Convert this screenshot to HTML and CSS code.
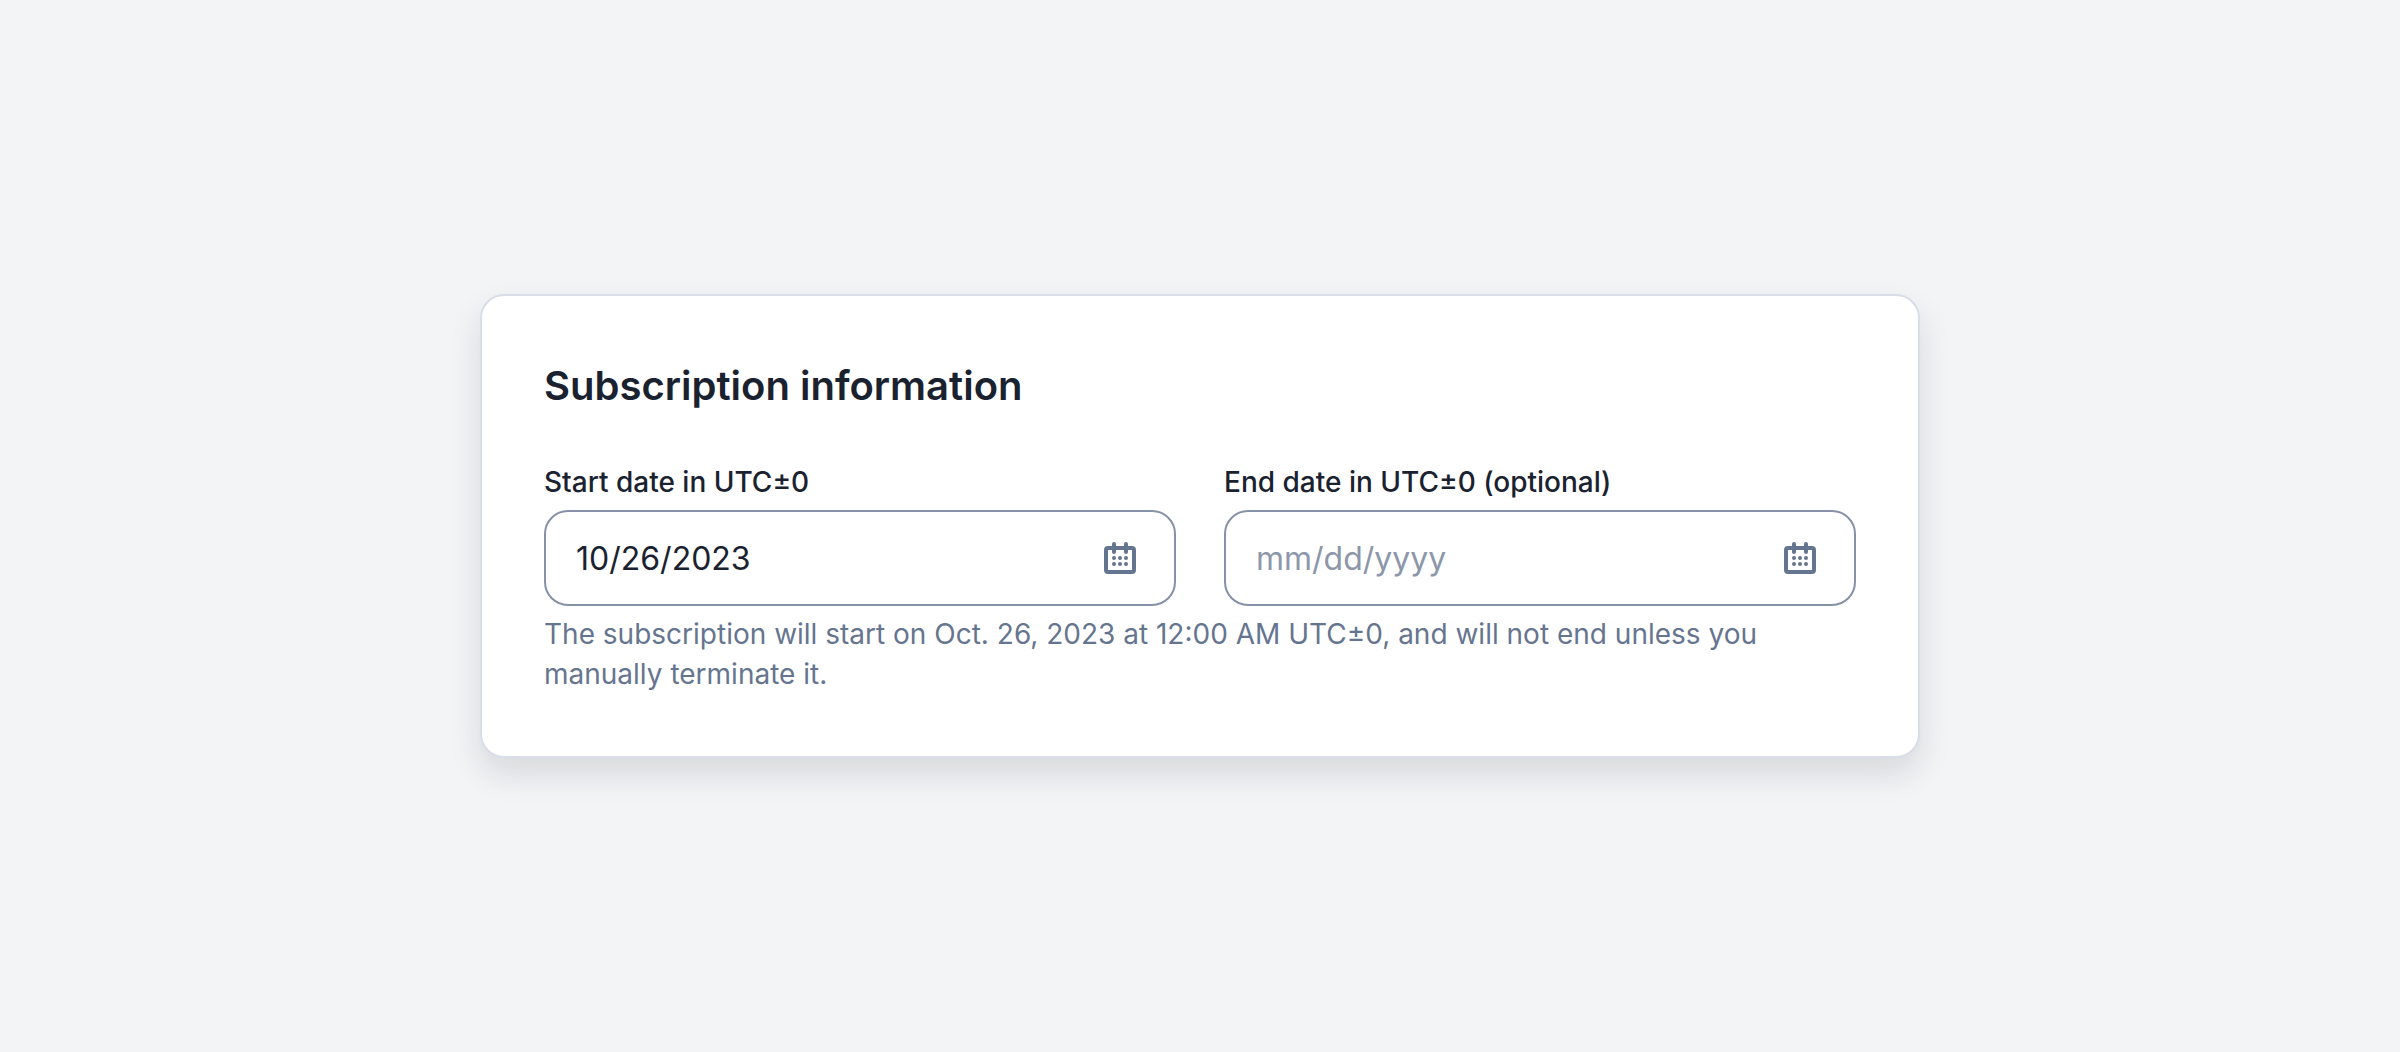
FILE: index.html
```html
<!DOCTYPE html>
<html lang="en">
<head>
<meta charset="utf-8">
<meta name="viewport" content="width=device-width, initial-scale=1">
<title>Subscription information</title>
<link rel="stylesheet" href="styles.css">
</head>
<body>
<form class="card">
  <h1>Subscription information</h1>
  <div class="fields">
    <div class="field">
      <label for="start-date">Start date in UTC±0</label>
      <div class="date-input">
        <input type="text" id="start-date" value="10/26/2023" placeholder="mm/dd/yyyy" aria-describedby="date-help">
        <button type="button" aria-label="Choose start date">
          <svg viewBox="0 0 32 32" aria-hidden="true">
            <rect x="2" y="6" width="28" height="24" rx="2"/>
            <path d="M10 2v8M22 2v8"/>
            <path d="M10 16h0M16 16h0M22 16h0M10 22h0M16 22h0M22 22h0"/>
          </svg>
        </button>
      </div>
    </div>
    <div class="field">
      <label for="end-date">End date in UTC±0 (optional)</label>
      <div class="date-input">
        <input type="text" id="end-date" placeholder="mm/dd/yyyy" aria-describedby="date-help">
        <button type="button" aria-label="Choose end date">
          <svg viewBox="0 0 32 32" aria-hidden="true">
            <rect x="2" y="6" width="28" height="24" rx="2"/>
            <path d="M10 2v8M22 2v8"/>
            <path d="M10 16h0M16 16h0M22 16h0M10 22h0M16 22h0M22 22h0"/>
          </svg>
        </button>
      </div>
    </div>
  </div>
  <p class="help" id="date-help">The subscription will start on Oct. 26, 2023 at 12:00 AM UTC±0, and will not end unless you manually terminate it.</p>
</form>
</body>
</html>
```
FILE: styles.css
```css
* {
  box-sizing: border-box;
}

body {
  display: flex;
  align-items: center;
  justify-content: center;
  min-height: 100vh;
  margin: 0;
  background: #f3f4f6;
  color: #1a2230;
  font-family: Inter, "Liberation Sans", sans-serif;
}

.card {
  width: 60%;
  padding: 62px;
  background: #fff;
  border: 2px solid #d8dde8;
  border-radius: 24px;
  box-shadow: 0 16px 32px rgba(24, 24, 40, 0.12);
}

h1 {
  margin: 0 0 48px;
  font-size: 40px;
  font-weight: 600;
  line-height: 56px;
}

.fields {
  display: grid;
  grid-template-columns: 1fr 1fr;
  gap: 48px;
}

.field label {
  display: block;
  margin-bottom: 8px;
  font-size: 28px;
  font-weight: 500;
  line-height: 40px;
}

.date-input {
  display: flex;
  align-items: center;
  padding: 0 38px 0 30px;
  border: 2px solid #8792a8;
  border-radius: 24px;
}

.date-input input {
  flex: 1;
  min-width: 0;
  height: 92px;
  padding: 0;
  border: none;
  outline: none;
  background: transparent;
  color: inherit;
  font-family: inherit;
  font-size: 32px;
}

.date-input input::placeholder {
  color: #8d97aa;
  opacity: 1;
}

.date-input button {
  padding: 0;
  border: none;
  background: transparent;
  color: #66758f;
  cursor: pointer;
}

.date-input svg {
  display: block;
  width: 32px;
  height: 32px;
  fill: none;
  stroke: currentColor;
  stroke-width: 4;
  stroke-linecap: round;
}

.help {
  margin: 8px 0 0;
  color: #66758f;
  font-size: 28px;
  line-height: 40px;
}
```
